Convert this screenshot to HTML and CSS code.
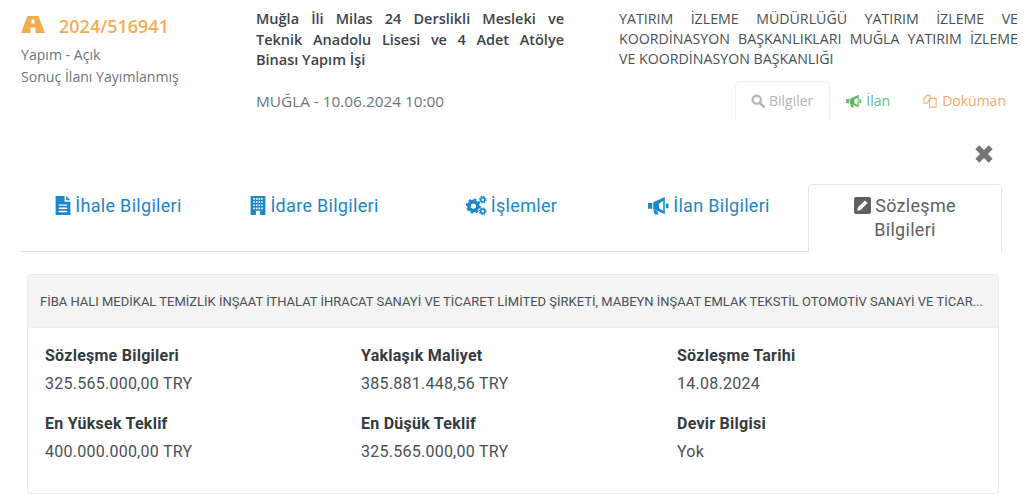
FILE: index.html
```html
<!DOCTYPE html>
<html lang="tr">
<head>
<meta charset="utf-8">
<title>Sözleşme Bilgileri</title>
<link rel="stylesheet" href="styles.css">
</head>
<body>
<header class="summary">
  <div class="col-id">
    <div class="ikn">
      <svg class="road" viewBox="0 0 24 17"><path fill-rule="evenodd" d="M6.500 0h11L24 17H14.500v-5.500h-5V17H0zM10.500 3.500v4h3v-4z"/></svg>
      <span>2024/516941</span>
    </div>
    <div class="sub">Yapım - Açık</div>
    <div class="sub">Sonuç İlanı Yayımlanmış</div>
  </div>
  <div class="col-title">
    <p class="title">Muğla İli Milas 24 Derslikli Mesleki ve Teknik Anadolu Lisesi ve 4 Adet Atölye Binası Yapım İşi</p>
    <p class="place">MUĞLA - 10.06.2024 10:00</p>
  </div>
  <div class="col-org">
    <p class="org">YATIRIM İZLEME MÜDÜRLÜĞÜ YATIRIM İZLEME VE KOORDİNASYON BAŞKANLIKLARI MUĞLA YATIRIM İZLEME VE KOORDİNASYON BAŞKANLIĞI</p>
    <nav class="mini">
      <a class="mini-tab is-active"><svg class="mi" viewBox="0 0 16 16"><circle cx="6.500" cy="6.500" r="4.700" fill="none" stroke="currentColor" stroke-width="2.400"/><path d="M10 10l4.500 4.500" stroke="currentColor" stroke-width="3" stroke-linecap="round"/></svg>Bilgiler</a>
      <a class="mini-tab green"><svg class="mi wide" viewBox="0 0 20 18"><path fill="#5cb85c" fill-rule="evenodd" d="M0 6.500h4v5.500H0zM5 6 16 1v16L5 12.500zM10.500 7v4.500L14.500 14V4.500zM17 7h2.500v4.500H17zM5 13.500h3.500l1.500 4H6.500z"/></svg>İlan</a>
      <a class="mini-tab orange"><svg class="mi wide" viewBox="0 0 16 16"><path fill="none" stroke="currentColor" stroke-width="1.200" d="M1 5.500 4.500 1.500h3.500v3.500L5 10.500H1zM6.500 8 9.500 5H15v10H7.500V8z"/></svg>Doküman</a>
    </nav>
  </div>
</header>

<div class="close-row"><svg class="close" viewBox="0 0 18 18"><path d="M3 3l12 12M15 3 3 15" stroke="currentColor" stroke-width="5"/></svg></div>

<nav class="tabs">
  <a class="tab"><svg class="ti" viewBox="0 0 14 18"><path fill="currentColor" fill-rule="evenodd" d="M0 0h8.500v5.500H14V18H0zM10 0l4 4h-4zM3 8v1.300h8V8zM3 11v1.300h8V11zM3 14v1.300h8V14z"/></svg>İhale Bilgileri</a>
  <a class="tab"><svg class="ti" viewBox="0 0 14 18"><path fill="currentColor" fill-rule="evenodd" d="M0 0h14v18H0zM2.500 2v1.500H4V2zM5 2v1.500h1.500V2zM7.500 2v1.500H9V2zM10 2v1.500h1.500V2zM2.500 5v1.500H4V5zM5 5v1.500h1.500V5zM7.500 5v1.500H9V5zM10 5v1.500h1.500V5zM2.500 8v1.500H4V8zM5 8v1.500h1.500V8zM7.500 8v1.500H9V8zM10 8v1.500h1.500V8zM2.500 11v1.500H4V11zM5 11v1.500h1.500V11zM7.500 11v1.500H9V11zM10 11v1.500h1.500V11zM5 14v4h4v-4z"/></svg>İdare Bilgileri</a>
  <a class="tab"><svg class="ti gears" viewBox="0 0 20 18"><circle cx="7" cy="9.500" r="4.200" fill="none" stroke="currentColor" stroke-width="3.400"/><circle cx="7" cy="9.500" r="6.300" fill="none" stroke="currentColor" stroke-width="1.800" stroke-dasharray="2.500 2.450"/><circle cx="16" cy="3.500" r="2" fill="none" stroke="currentColor" stroke-width="1.600"/><circle cx="16" cy="3.500" r="3.200" fill="none" stroke="currentColor" stroke-width="1" stroke-dasharray="1.300 1.210"/><circle cx="16" cy="14.500" r="2" fill="none" stroke="currentColor" stroke-width="1.600"/><circle cx="16" cy="14.500" r="3.200" fill="none" stroke="currentColor" stroke-width="1" stroke-dasharray="1.300 1.210"/></svg>İşlemler</a>
  <a class="tab"><svg class="ti gears" viewBox="0 0 20 18"><path fill="currentColor" fill-rule="evenodd" d="M0 6.500h4v5.500H0zM5 6 16 1v16L5 12.500zM10.500 7v4.500L14.500 14V4.500zM17 7h2.500v4.500H17zM5 13.500h3.500l1.500 4H6.500z"/></svg>İlan Bilgileri</a>
  <a class="tab is-active"><svg class="ti pen" viewBox="0 0 16 16"><path fill="currentColor" fill-rule="evenodd" d="M2 0h12a2 2 0 0 1 2 2v12a2 2 0 0 1-2 2H2a2 2 0 0 1-2-2V2a2 2 0 0 1 2-2zM3 13l3.300-.8 6.500-6.500-2.500-2.500-6.500 6.500z"/></svg>Sözleşme Bilgileri</a>
</nav>

<section class="card">
  <div class="card-head">FİBA HALI MEDİKAL TEMİZLİK İNŞAAT İTHALAT İHRACAT SANAYİ VE TİCARET LİMİTED ŞİRKETİ, MABEYN İNŞAAT EMLAK TEKSTİL OTOMOTİV SANAYİ VE TİCAR...</div>
  <div class="card-body">
    <div class="field"><h4>Sözleşme Bilgileri</h4><p>325.565.000,00 TRY</p></div>
    <div class="field"><h4>Yaklaşık Maliyet</h4><p>385.881.448,56 TRY</p></div>
    <div class="field"><h4>Sözleşme Tarihi</h4><p>14.08.2024</p></div>
    <div class="field"><h4>En Yüksek Teklif</h4><p>400.000.000,00 TRY</p></div>
    <div class="field"><h4>En Düşük Teklif</h4><p>325.565.000,00 TRY</p></div>
    <div class="field"><h4>Devir Bilgisi</h4><p>Yok</p></div>
  </div>
</section>
</body>
</html>
```
FILE: styles.css
```css
* { box-sizing: border-box; }
html, body { margin: 0; height: 503px; overflow: hidden; background: #fff; }
body { font-family: Roboto, sans-serif; color: #495057; font-size: 16px; }
p, h4 { margin: 0; }

.summary { display: flex; height: 121px; padding: 9px 6px 0 21px; font-family: "Open Sans", sans-serif; }
.col-id { width: 235px; }
.ikn { display: flex; align-items: center; color: #f2ae55; font-size: 18px; font-weight: 600; height: 34px; margin-bottom: 1px; }
.road { width: 24px; height: 17px; margin-right: 14px; fill: #f0ad4e; margin-top: -4px; }
.sub { font-size: 14.100px; line-height: 22px; color: #6c757d; }
.col-title { width: 308px; margin-right: 55px; }
.title { font-size: 14.500px; font-weight: 600; line-height: 20.500px; text-align: justify; color: #3d444b; }
.place { margin-top: 20px; font-size: 15.350px; color: #6c757d; line-height: 21px; }
.col-org { flex: 1; display: flex; flex-direction: column; }
.org { font-size: 14.200px; line-height: 20px; text-align: justify; color: #495057; }
.mini { display: flex; justify-content: flex-end; margin-top: 12px; font-size: 14px; }
.mini-tab { display: flex; align-items: center; height: 40px; padding: 0 15px 2px; border: 1px solid transparent; border-bottom: 0; border-radius: 5px 5px 0 0; white-space: nowrap; }
.mini-tab:last-child { padding-right: 11px; }
.mini-tab.is-active { color: #b5b5b5; border-color: #f0f0f0; padding: 0 16px 2px 15px; }
.green { color: #62bf85; }
.orange { color: #f5ab63; }
.mi { width: 14px; height: 14px; margin-right: 4px; }
.mi.wide { width: 16px; }

.close-row { display: flex; justify-content: flex-end; padding-right: 30px; height: 63px; padding-top: 23px; }
.close { width: 20px; height: 20px; color: #757575; }

.tabs { display: grid; grid-template-columns: 195px 197px 197px 198px 194px; margin: 0 22px 0 21px; height: 68px; border-bottom: 1px solid #e3e3e3; font-size: 18px; line-height: 24px; letter-spacing: .3px; }
.tab { display: block; padding: 10px 12px 0; text-align: center; color: #1c87c9; }
.tab.is-active { color: #5f5f5f; height: 68px; border: 1px solid #e6e6e6; border-bottom: 0; border-radius: 5px 5px 0 0; background: #fff; padding: 9px 30px 0; }
.ti { width: 16px; height: 19px; margin-right: 4px; vertical-align: -3px; fill: currentColor; }
.ti.gears { width: 21px; }
.ti.pen { width: 17px; height: 17px; vertical-align: -2px; }

.card { margin: 22px 25px 0 27px; border: 1px solid #ebebeb; border-radius: 4px; height: 220px; }
.card-head { height: 53px; padding: 0 12px; display: flex; align-items: center; background: #f4f4f4; font-size: 12.980px; color: #495057; white-space: nowrap; overflow: hidden; border-bottom: 1px solid #eee; }
.card-body { display: grid; grid-template-columns: repeat(3, 316px); grid-auto-rows: 68px; padding: 17px 17px 0; letter-spacing: .25px; }
.field h4 { font-size: 16px; font-weight: 700; line-height: 22px; color: #343a40; }
.field p { margin-top: 6px; font-size: 16px; line-height: 22px; color: #495057; }
```
